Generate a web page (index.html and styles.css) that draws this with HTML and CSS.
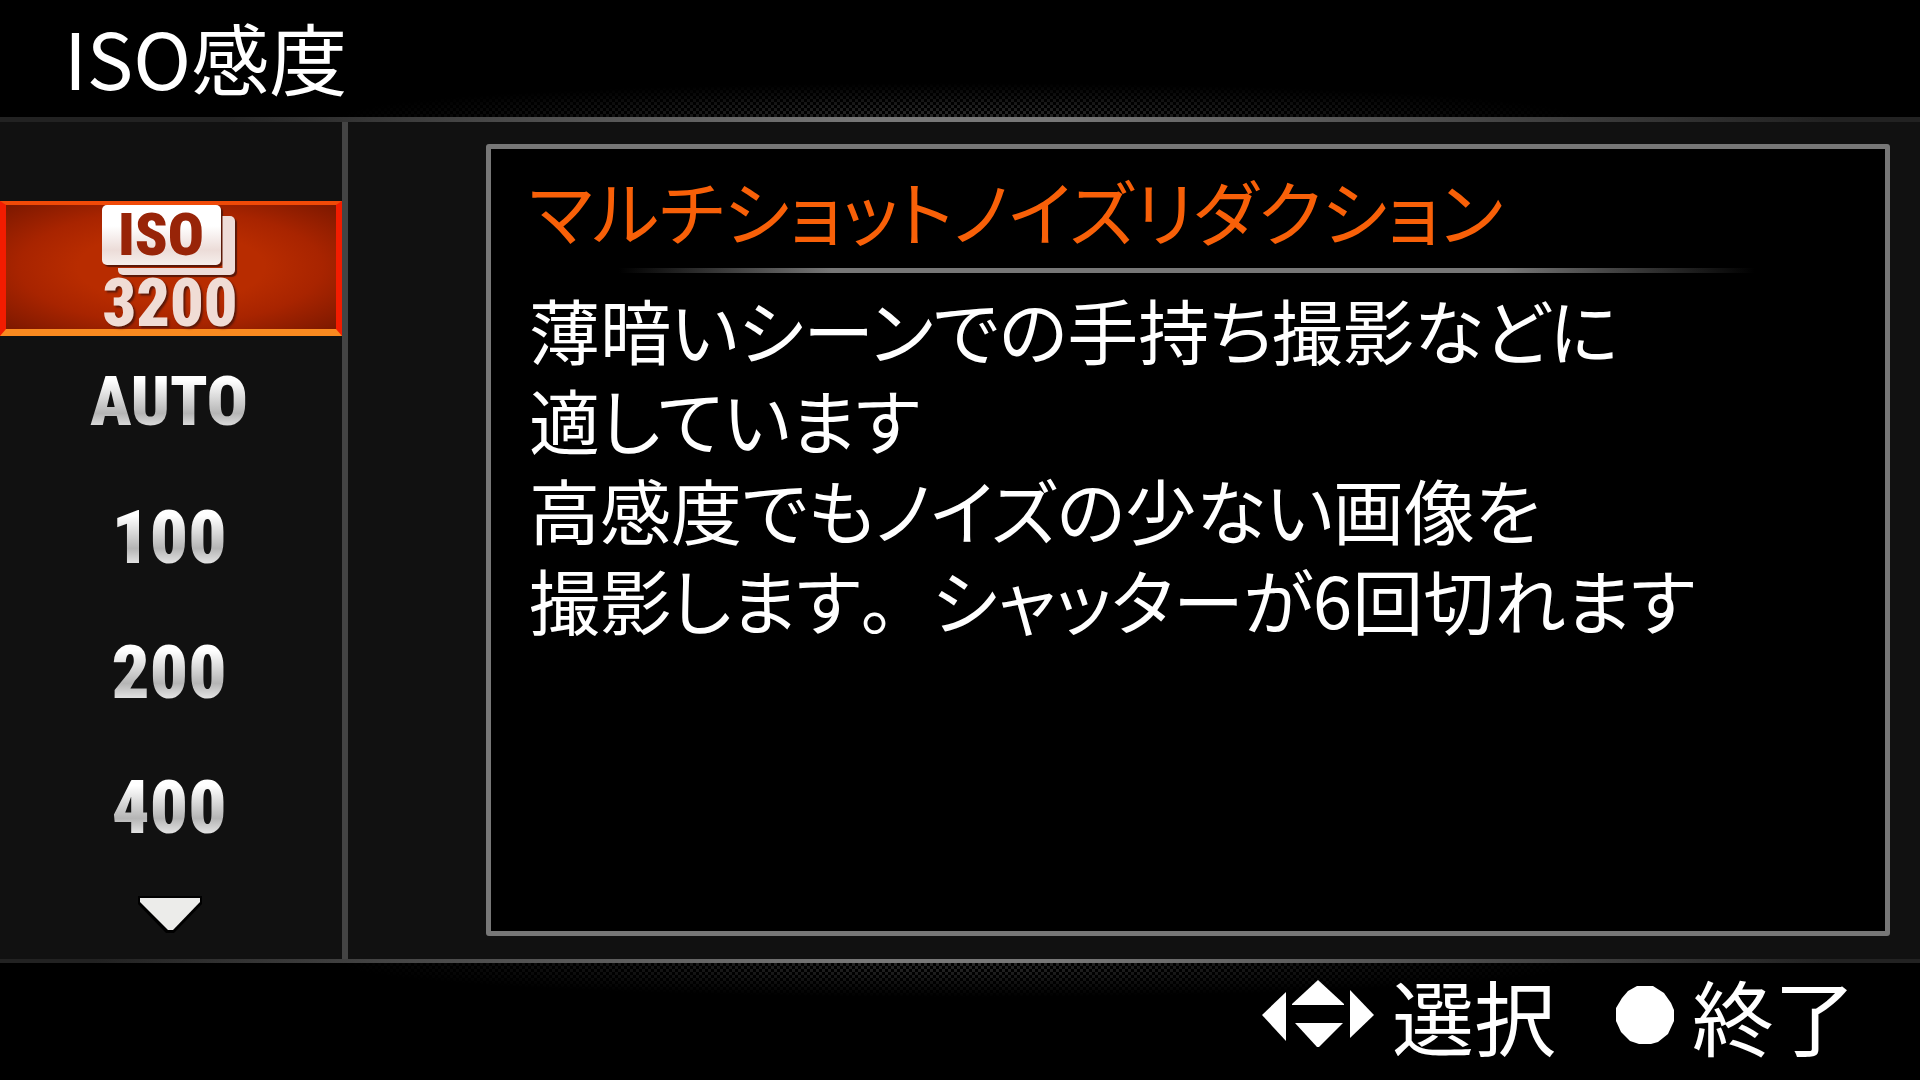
FILE: index.html
```html
<!DOCTYPE html>
<html lang="ja">
<head>
  <meta charset="UTF-8">
  <meta name="viewport" content="width=device-width, initial-scale=1.0">
  <title>ISO感度</title>
  <link rel="stylesheet" href="styles.css">
</head>
<body>

  <header class="top">
    <h1>ISO感度</h1>
  </header>

  <main class="content">
    <nav class="menu">
      <button type="button" class="item selected">
        <span class="badge">ISO</span>
        <span class="value">3200</span>
      </button>
      <button type="button" class="item auto"><span class="metal">AUTO</span></button>
      <button type="button" class="item"><span class="metal">100</span></button>
      <button type="button" class="item"><span class="metal">200</span></button>
      <button type="button" class="item"><span class="metal">400</span></button>
      <button type="button" class="more" aria-label="次へ">
        <svg width="66" height="38" viewBox="0 0 66 38">
          <path d="M1 0H65V8L37 37H29L1 8Z" fill="#000"/>
          <path d="M3 2H63V6L36 34H31L3 6Z" fill="#ececea"/>
        </svg>
      </button>
    </nav>

    <section class="panel">
      <h2>マルチショットノイズリダクション</h2>
      <p>薄暗いシーンでの手持ち撮影などに<br>
      適しています<br>
      高感度でもノイズの少ない画像を<br>
      撮影します<span class="stop">。</span>シャッターが6回切れます</p>
    </section>
  </main>

  <footer class="bottom">
    <span class="hint">
      <svg width="112" height="66" viewBox="0 0 112 66" fill="#fff">
        <path d="M0 33L24 10V59Z"/>
        <path d="M56 -2L82 22V23H30V22Z"/>
        <path d="M33 41H81L57 65H55Z"/>
        <path d="M88 8L112 33L88 56Z"/>
      </svg>
      選択
    </span>
    <span class="hint">
      <svg width="58" height="58" viewBox="0 0 58 58" fill="#fff">
        <path d="M21 0H37L48 7L55 17L58 24V35L52 48L42 56L35 58H23L14 55L5 46L0 35V22L6 12L12 5Z"/>
      </svg>
      終了
    </span>
  </footer>

</body>
</html>
```
FILE: styles.css
```css
* {
  box-sizing: border-box;
}

body {
  margin: 0;
  min-height: 100vh;
  display: flex;
  flex-direction: column;
  background: #000;
  color: #fff;
  font-family: "Noto Sans CJK JP", sans-serif;
}

h1, h2, p {
  margin: 0;
  font-weight: 400;
}

/* top bar */
.top {
  height: 122px;
  padding: 0 64px;
  border-bottom: 5px solid;
  border-image: linear-gradient(to right, #222 12%, #444 24%, #777 45%, #777 55%, #444 78%, #222 95%) 1;
  background:
    repeating-conic-gradient(#000 0 25%, transparent 0 50%) 0 0 / 6px 6px,
    radial-gradient(ellipse 620px 34px at 50% 100%, #2a2a2a, #000);
}

h1 {
  font-size: 78px;
  line-height: 112px;
}

/* middle */
.content {
  flex: 1;
  display: flex;
  background: #111;
}

.menu {
  width: 348px;
  padding-top: 79px;
  border-right: 6px solid #444;
  display: flex;
  flex-direction: column;
}

button {
  margin: 0;
  padding: 0;
  border: none;
  background: none;
  color: inherit;
}

.item {
  height: 135px;
  display: flex;
  flex-direction: column;
  align-items: center;
  justify-content: center;
  padding: 0 4px 4px 0;
  font-family: "Roboto Condensed", Roboto, sans-serif;
  font-weight: 900;
  font-size: 75px;
  line-height: 76px;
}

.auto {
  font-size: 68px;
}

.metal {
  background: linear-gradient(#fff 22%, #b5b5b5 65%, #e6e6e6 86%);
  -webkit-background-clip: text;
  background-clip: text;
  color: transparent;
}

.selected {
  justify-content: flex-start;
  padding: 0 2px 0 0;
  border: 6px solid #f21c00;
  border-top: 4px solid #f04a08;
  border-bottom: 7px solid #f98a20;
  background: radial-gradient(ellipse at center, #b82c00 40%, #a82400 65%, #7c1800);
}

.badge {
  position: relative;
  z-index: 0;
  width: 119px;
  height: 60px;
  margin-right: 18px;
  border-radius: 5px;
  background: linear-gradient(#fff 35%, #ecdcd8 75%, #f6efec);
  box-shadow: 2px 2px 1px #5a1808;
  color: #982408;
  font-size: 60px;
  line-height: 60px;
}

.badge::before {
  content: "";
  position: absolute;
  z-index: -1;
  inset: 11px -14px -10px 16px;
  border-radius: 5px;
  background: #eedcd8;
  box-shadow: 2px 2px 1px #5a1808;
  clip-path: polygon(105px 0, 110% 0, 110% 110%, 0 110%, 0 52px, 105px 52px);
}

.value {
  margin-top: 9px;
  font-size: 66px;
  line-height: 60px;
  color: #f0dcd5;
  text-shadow: 2px 2px 2px #5a1808;
}

.more {
  height: 38px;
  margin-top: 20px;
  padding-right: 2px;
}

.more svg {
  display: block;
  margin: 0 auto;
}

/* help text */
.panel {
  flex: 1;
  margin: 22px 30px 23px 138px;
  padding: 16px 38px;
  border: 5px solid #777;
  border-radius: 3px;
  background: #000;
  font-size: 71px;
  line-height: 90px;
  font-feature-settings: "palt";
  white-space: nowrap;
}

h2 {
  height: 108px;
  font-size: 71px;
  line-height: 88px;
  color: #f86008;
  background: linear-gradient(to right, transparent 90px, #777 23%, #777 74%, transparent 93%) 0 100% / 100% 5px no-repeat;
}

.panel p {
  margin-top: 10px;
}

/* full-width stop keeps a gap between the two sentences */
.stop {
  font-feature-settings: normal;
}

/* key hints */
.bottom {
  height: 121px;
  padding: 0 64px 14px 0;
  display: flex;
  justify-content: flex-end;
  gap: 60px;
  border-top: 4px solid;
  border-image: linear-gradient(to right, #222 5%, #444 20%, #777 45%, #777 55%, #444 80%, #222 95%) 1;
  background:
    repeating-conic-gradient(#000 0 25%, transparent 0 50%) 0 0 / 6px 6px,
    radial-gradient(ellipse 620px 34px at 50% 0, #2a2a2a, #000);
}

.hint {
  display: flex;
  align-items: center;
  gap: 18px;
  font-size: 82px;
  line-height: 100px;
}

.hint svg {
  overflow: visible;
}
```
